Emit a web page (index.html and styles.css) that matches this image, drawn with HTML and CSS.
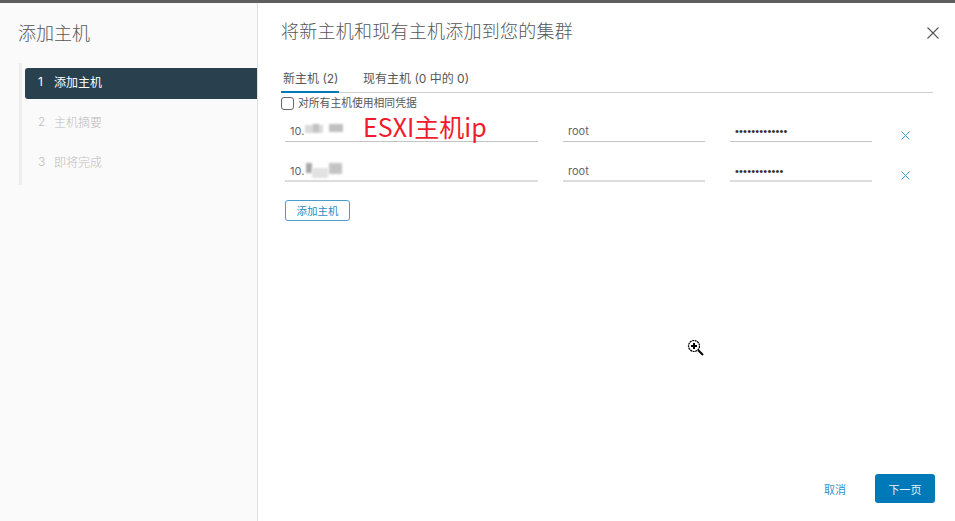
FILE: index.html
```html
<!DOCTYPE html>
<html lang="zh">
<head>
<meta charset="utf-8">
<title>添加主机</title>
<link rel="stylesheet" href="styles.css">
</head>
<body>
<div class="page">
  <div class="topbar"></div>
  <div class="wizard">
    <aside class="side">
      <h2 class="side-title">添加主机</h2>
      <ol class="steps">
        <li class="step active"><span class="num">1</span><span>添加主机</span></li>
        <li class="step"><span class="num">2</span><span>主机摘要</span></li>
        <li class="step"><span class="num">3</span><span>即将完成</span></li>
      </ol>
    </aside>
    <main class="main">
      <header class="head">
        <h1 class="title">将新主机和现有主机添加到您的集群</h1>
        <svg class="close" width="12" height="12" viewBox="0 0 12 12"><path d="M0.5 0.5L11.5 11.5M11.5 0.5L0.5 11.5" stroke="#565656" stroke-width="1.1" fill="none"/></svg>
      </header>
      <nav class="tabs">
        <span class="tab current">新主机 (2)</span>
        <span class="tab">现有主机 (0 中的 0)</span>
      </nav>
      <label class="same"><span class="check"></span><span>对所有主机使用相同凭据</span></label>
      <div class="row">
        <div class="field host"><span>10.</span><span class="blur b1"></span><span class="blur b2"></span><span class="blur b3"></span></div>
        <div class="field user"><span>root</span></div>
        <div class="field pass"><span class="dots">•••••••••••••</span></div>
        <svg class="del" width="9" height="9" viewBox="0 0 9 9"><path d="M0.5 0.5L8.5 8.5M8.5 0.5L0.5 8.5" stroke="#3a9dd8" stroke-width="1" fill="none"/></svg>
        <span class="note">ESXI主机ip</span>
      </div>
      <div class="row second">
        <div class="field host"><span>10.</span><span class="blur b4"></span><span class="blur b5"></span><span class="blur b6"></span></div>
        <div class="field user"><span>root</span></div>
        <div class="field pass"><span class="dots">••••••••••••</span></div>
        <svg class="del" width="9" height="9" viewBox="0 0 9 9"><path d="M0.5 0.5L8.5 8.5M8.5 0.5L0.5 8.5" stroke="#3a9dd8" stroke-width="1" fill="none"/></svg>
      </div>
      <button class="add" type="button">添加主机</button>
      <footer class="foot">
        <span class="cancel">取消</span>
        <button class="next" type="button">下一页</button>
      </footer>
      <svg class="cursor" width="17" height="17" viewBox="0 0 17 17">
        <circle cx="7" cy="7" r="5.5" fill="#fff" stroke="#000" stroke-width="1.2" stroke-dasharray="2 .6"/>
        <path d="M4 7H10M7 4V10" stroke="#000" stroke-width="2" fill="none"/>
        <path d="M11 11L16 16" stroke="#000" stroke-width="2" fill="none"/>
      </svg>
    </main>
  </div>
</div>
</body>
</html>
```
FILE: styles.css
```css
* { box-sizing: border-box; }
html, body { margin: 0; padding: 0; background: #fff; }
body { font-family: "Inter", "Noto Sans CJK SC", sans-serif; color: #565656; }
.page { width: 955px; height: 521px; overflow: hidden; display: flex; flex-direction: column; }
.topbar { height: 3px; background: #5e5e5e; flex: none; }
.wizard { flex: 1; display: flex; min-height: 0; }

.side { width: 258px; flex: none; background: #fafafa; border-right: 1px solid #dfdfdf; padding: 19px 0 0 18px; }
.side-title { margin: 0; font-size: 18px; line-height: 24px; font-weight: 300; color: #565656; }
.steps { list-style: none; margin: 17px 0 0 1px; padding: 5px 0 0 3px; width: 238px; height: 122px; border-left: 3px solid #eeeeee; }
.step { height: 31px; margin-bottom: 9px; padding: 0 0 5px 13px; display: flex; align-items: center; font-size: 12px; font-weight: 300; color: #bdbdbd; border-radius: 3px 0 0 3px; }
.step .num { width: 16px; }
.step.active { background: #29414e; color: #fff; font-weight: 400; }

.main { flex: 1; position: relative; padding: 0 22px 0 23px; min-width: 0; }
.head { height: 53px; display: flex; justify-content: space-between; align-items: flex-start; padding-top: 16px; }
.title { margin: 0; font-size: 18px; line-height: 26px; font-weight: 300; color: #565656; letter-spacing: .25px; }
.close { margin: 8px -6px 0 0; }
.tabs { display: flex; height: 37px; border-bottom: 1px solid #cfcfcf; gap: 22px; font-size: 12px; }
.tab { padding: 0 2px; line-height: 46px; height: 37px; margin-bottom: -1px; white-space: nowrap; }
.tab.current { width: 58px; color: #565656; border-bottom: 2px solid #0079b8; }
.same { display: flex; align-items: center; gap: 4px; height: 13px; margin-top: 4px; font-size: 10.8px; line-height: 13px; }
.check { width: 13px; height: 13px; border: 1px solid #666; border-radius: 3px; background: #fff; }

.row { position: relative; display: flex; height: 32px; padding-left: 4px; align-items: flex-end; }
.row.second { height: 31px; margin-top: 9px; }
.field { position: relative; height: 24px; border-bottom: 1px solid #c4c4c4; font-size: 11px; line-height: 27px; padding-left: 5px; color: #666; }
.second .field { border-bottom: 2px solid #dcdcdc; }
.host { width: 253px; margin-right: 25px; }
.user { width: 142px; margin-right: 25px; }
.pass { width: 142px; color: #333; line-height: 26px; }
.dots { font-size: 11px; letter-spacing: .2px; font-family: "Liberation Sans", sans-serif; }
.del { margin: 0 0 2px 29px; align-self: flex-end; }
.note { position: absolute; left: 82px; top: 0; font-size: 25px; line-height: 32px; color: #f01c2e; font-family: "Noto Sans CJK SC", "Noto Sans", sans-serif; font-weight: 400; }
.blur { position: absolute; background: #b0b0b0; filter: blur(1px); }
.b1 { left: 20px; top: 7px; width: 18px; height: 8px; background: #dadada; }
.b2 { left: 28px; top: 6px; width: 6px; height: 8px; background: #c2c2c2; }
.b3 { left: 44px; top: 6px; width: 14px; height: 8px; background: #c0c0c0; }
.b4 { left: 21px; top: 5px; width: 6px; height: 10px; background: #a8a8a8; }
.b5 { left: 27px; top: 10px; width: 16px; height: 10px; background: #e2e2e2; }
.b6 { left: 44px; top: 5px; width: 13px; height: 11px; background: #c4c4c4; }

.add { display: block; margin: 18px 0 0 4px; width: 65px; height: 21px; padding: 0; background: #fff; border: 1px solid #4a9ccb; border-radius: 3px; color: #2a8cc2; font: inherit; font-size: 10.5px; }
.foot { position: absolute; right: 20px; top: 471px; display: flex; align-items: center; gap: 29px; }
.cancel { font-size: 11px; color: #2f94c8; }
.next { width: 60px; height: 29px; padding: 0; border: none; border-radius: 3px; background: #0079b8; color: #e9f4fa; font: inherit; font-size: 11px; }
.cursor { position: absolute; left: 429px; top: 336px; }
```
